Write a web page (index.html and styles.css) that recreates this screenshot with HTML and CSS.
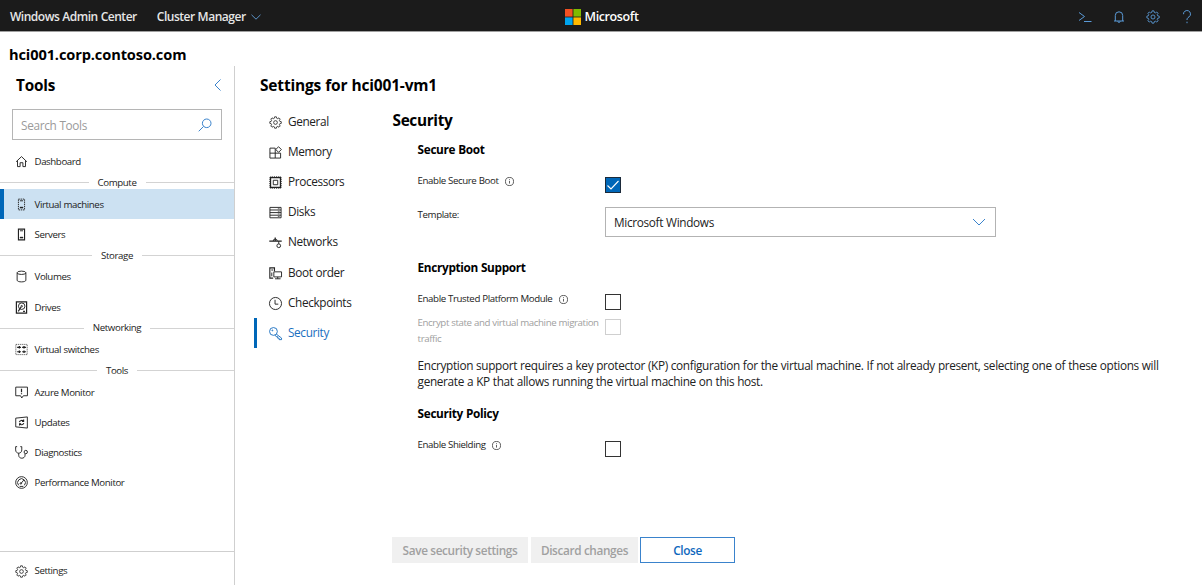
FILE: index.html
```html
<!DOCTYPE html>
<html lang="en">
<head>
<meta charset="utf-8">
<title>Windows Admin Center</title>
<link rel="stylesheet" href="styles.css">
</head>
<body>
<svg class="defs" width="0" height="0">
  <symbol id="gear" viewBox="0 0 16 16"><path d="M6.900 1h2.200l.4 1.800 1.200.5 1.600-1 1.500 1.500-1 1.600.5 1.200 1.800.4v2.100l-1.800.4-.5 1.200 1 1.600-1.500 1.500-1.600-1-1.200.5L9.100 15H6.900l-.4-1.700-1.200-.5-1.600 1-1.500-1.500 1-1.600-.5-1.200L1 9.100V7l1.700-.4.5-1.200-1-1.600 1.500-1.500 1.600 1 1.200-.5z"/><circle cx="8" cy="8" r="2.300"/></symbol>
  <symbol id="info" viewBox="0 0 10 10"><circle cx="5" cy="5" r="4.500"/><path d="M5 4.300v3M5 2.500v.9"/></symbol>
  <symbol id="chevron" viewBox="0 0 14 8"><path d="M1 1l6 6 6-6"/></symbol>
</svg>
<header class="topbar">
  <div class="topbar-left">
    <span>Windows Admin Center</span>
    <span class="solution">Cluster Manager</span>
    <svg class="icon top-chevron" viewBox="0 0 10 6"><path d="M.5 .8L5 5.200 9.500 .8"/></svg>
  </div>
  <div class="brand">
    <svg class="brand-logo" viewBox="0 0 16 16"><path fill="#f25022" d="M0 0h7.600v7.600H0z"/><path fill="#7fba00" d="M8.400 0H16v7.600H8.400z"/><path fill="#00a4ef" d="M0 8.400h7.600V16H0z"/><path fill="#ffb900" d="M8.400 8.400H16V16H8.400z"/></svg>
    <span>Microsoft</span>
  </div>
  <div class="topbar-actions">
    <svg class="icon" viewBox="0 0 14 14"><path d="M1 2.500l5.500 4L1 10.500M6 11.500h7.500"/></svg>
    <svg class="icon" viewBox="0 0 14 14"><path d="M2 11h10M3.300 11V5.500a3.700 3.700 0 0 1 7.400 0V11M5.800 11.300c0 1.500 2.400 1.500 2.400 0"/></svg>
    <svg class="icon"><use href="#gear"/></svg>
    <svg class="icon" viewBox="0 0 14 14"><path d="M3.500 4.200a3.500 3.500 0 1 1 5.500 2.700C7.500 7.900 7 8.300 7 10M7 11.700v1.500"/></svg>
  </div>
</header>
<h1 class="host">hci001.corp.contoso.com</h1>
<div class="shell">
  <aside class="sidebar">
    <div class="sidebar-head">
      <h2>Tools</h2>
      <svg class="icon collapse" viewBox="0 0 7 12"><path d="M6.500 .5L1 6l5.500 5.500"/></svg>
    </div>
    <div class="search">
      <span>Search Tools</span>
      <svg class="icon" viewBox="0 0 14 14"><circle cx="8.700" cy="5.300" r="4.300"/><path d="M5.600 8.400L.7 13.300"/></svg>
    </div>
    <nav class="tools">
      <a class="tool"><svg class="icon" viewBox="0 0 14 14"><path d="M1.200 7.300L7 1.700l5.800 5.600M2.700 6.200v6.300h2.800V8.300h3v4.200h2.800V6.200"/></svg>Dashboard</a>
      <div class="group">Compute</div>
      <a class="tool selected"><svg class="icon" viewBox="0 0 14 14"><path stroke-dasharray="1.500 .8" d="M3.700 1.200h6.600v11.600H3.700z"/><path stroke-width="1.600" d="M5.200 10.300h3.600"/><path d="M5.300 3h3.400"/></svg>Virtual machines</a>
      <a class="tool"><svg class="icon" viewBox="0 0 14 14"><path stroke-width="1.200" d="M3.700 1.200h6.600v11.600H3.700z"/><path stroke-width="1.600" d="M5.200 10.300h3.600"/><path d="M5.300 3h3.400"/></svg>Servers</a>
      <div class="group">Storage</div>
      <a class="tool"><svg class="icon" viewBox="0 0 14 14"><ellipse cx="7" cy="3" rx="4.700" ry="1.800"/><path d="M2.300 3v8c0 2.400 9.400 2.400 9.400 0V3"/></svg>Volumes</a>
      <a class="tool"><svg class="icon" viewBox="0 0 14 14"><path stroke-width="1.300" d="M1.500 .9h11v12.200h-11z"/><circle cx="7.200" cy="5.600" r="3.500"/><circle cx="7.200" cy="5.600" r=".8"/><path stroke-width="1.300" d="M6.500 6.500l-3 4.700M8.700 11.200h2"/></svg>Drives</a>
      <div class="group">Networking</div>
      <a class="tool"><svg class="icon" viewBox="0 0 14 14"><path stroke-width=".8" stroke-dasharray="1.200 .9" d="M.9 1.500h12.200v11H.9z"/><path stroke-width="1.300" d="M2.300 4.600h4.100M7.700 4.600h4.100M2.300 9.400h4.100M7.700 9.400h4.100"/><path stroke-width="1.400" d="M4.700 3.200v2.800M9.700 3.200v2.800M4.700 8v2.800M9.700 8v2.800"/></svg>Virtual switches</a>
      <div class="group">Tools</div>
      <a class="tool"><svg class="icon" viewBox="0 0 14 14"><path d="M.8 1.200h12.600v9.300H9L7.300 12.900 6 10.500H.8z"/><path stroke-width="1.300" d="M7 3v3.700M7 7.700V9"/></svg>Azure Monitor</a>
      <a class="tool"><svg class="icon" viewBox="0 0 14 14"><path d="M.8 2.300l12.500-1.300v12L.8 11.700z"/><path stroke-width="1.200" d="M4.700 6.600c.5-2 3.200-2.600 4.500-.9M9.300 3.900v2H7.500M9.500 7.600c-.6 2-3.200 2.400-4.500.8M4.900 10.200V8.300h1.700"/></svg>Updates</a>
      <a class="tool"><svg class="icon" viewBox="0 0 14 14"><path d="M2.300 .7H.7v3.500c0 4.700 6.600 4.700 6.600 0V.7H5.700M4 7.700v2.300c0 4.200 6.800 4.200 6.800 0V8.300"/><circle cx="11.600" cy="6.500" r="1.800"/></svg>Diagnostics</a>
      <a class="tool"><svg class="icon" viewBox="0 0 14 14"><circle cx="7" cy="7" r="6.300"/><path d="M3.900 10a4.200 4.200 0 1 1 6.200 0M6.500 8l3-3.700M5 11.200h4"/><circle cx="6.300" cy="8" r=".8"/></svg>Performance Monitor</a>
    </nav>
    <div class="sidebar-foot"><a class="tool"><svg class="icon"><use href="#gear"/></svg>Settings</a></div>
  </aside>
  <main class="main">
    <h2 class="page-title">Settings for hci001-vm1</h2>
    <div class="panes">
      <nav class="settings-nav">
        <a class="setting"><svg class="icon"><use href="#gear"/></svg>General</a>
        <a class="setting"><svg class="icon" viewBox="0 0 14 14"><path d="M1 2.300h5.700V13H1zM1 7.700h11.500V13H6.700M10.300 .8l3 3-3 3-3-3z"/></svg>Memory</a>
        <a class="setting"><svg class="icon" viewBox="0 0 14 14"><path stroke-width="1.300" d="M1.700 1.700h10.600v10.600H1.700z"/><path d="M4.600 4.600h4.800v4.800H4.600z"/><path stroke-width=".9" stroke-dasharray="1 1" d="M1.500 .7h11M1.500 13.300h11M.7 1.500v11M13.300 1.500v11"/></svg>Processors</a>
        <a class="setting"><svg class="icon" viewBox="0 0 14 14"><path d="M1 1.500h12v11.200H1zM1 4.300h12M1 7.100h12M1 9.900h12"/><path stroke-width=".7" d="M9.500 2.900h2M9.500 5.700h2M9.500 8.500h2M9.500 11.300h2"/></svg>Disks</a>
        <a class="setting"><svg class="icon" viewBox="0 0 14 14"><path stroke-width="1.300" d="M.3 5.500h13.400M6.700 1.500v4"/><path d="M4.500 5.500a2.200 2.200 0 0 1 4.400 0M10.500 5.500v3"/><circle cx="10.500" cy="10.500" r="2"/></svg>Networks</a>
        <a class="setting"><svg class="icon" viewBox="0 0 14 14"><path stroke-width="1.200" d="M4.500 12H.9V1h5v3.500M2.500 3.300h2"/><path d="M5.200 5.200h8.300v5.500H5.200zM9.400 10.700v2M6.500 12.700h6M3 6v4"/></svg>Boot order</a>
        <a class="setting"><svg class="icon" viewBox="0 0 14 14"><circle cx="7" cy="7" r="6.500"/><path d="M6.500 3v4.700H10"/></svg>Checkpoints</a>
        <a class="setting current"><svg class="icon" viewBox="0 0 14 14"><circle cx="4.800" cy="4.800" r="4.200"/><path d="M8 7.700l5.500 4.200v1.700h-2.600v-1.600H9.300v-1.600H7.700L6.500 8.700"/><circle cx="3.600" cy="3.700" r=".5"/></svg>Security</a>
      </nav>
      <section class="content">
        <h2>Security</h2>
        <div class="form">
          <h3>Secure Boot</h3>
          <div class="field boot">
            <label>Enable Secure Boot <svg class="icon info"><use href="#info"/></svg></label>
            <span class="box checked"><svg viewBox="0 0 14 14"><path d="M1.500 7.500l3.500 3.500 7.500-8"/></svg></span>
          </div>
          <div class="field">
            <label>Template:</label>
            <div class="select"><span>Microsoft Windows</span><svg class="icon"><use href="#chevron"/></svg></div>
          </div>
          <h3 class="encryption-title">Encryption Support</h3>
          <div class="field tpm">
            <label>Enable Trusted Platform Module <svg class="icon info"><use href="#info"/></svg></label>
            <span class="box"></span>
          </div>
          <div class="field traffic">
            <label>Encrypt state and virtual machine migration<br>traffic</label>
            <span class="box"></span>
          </div>
          <p>Encryption support requires a key protector (KP) configuration for the virtual machine. If not already present, selecting one of these options will<br>generate a KP that allows running the virtual machine on this host.</p>
          <h3>Security Policy</h3>
          <div class="field shielding">
            <label>Enable Shielding <svg class="icon info"><use href="#info"/></svg></label>
            <span class="box"></span>
          </div>
        </div>
        <div class="buttons">
          <button class="save" disabled>Save security settings</button>
          <button class="discard" disabled>Discard changes</button>
          <button class="close">Close</button>
        </div>
      </section>
    </div>
  </main>
</div>
</body>
</html>
```
FILE: styles.css
```css
* { box-sizing: border-box; }
body {
  margin: 0;
  height: 585px;
  overflow: hidden;
  background: #fff;
  color: #222;
  font: 11.8px/16px "Open Sans", "Noto Sans", sans-serif;
  letter-spacing: -0.33px;
  word-spacing: 0.3px;
}
h1, h2, h3, p { margin: 0; }
.defs { display: block; }
.icon {
  width: 14px;
  height: 14px;
  flex: none;
  fill: none;
  stroke: currentColor;
  stroke-width: 1;
  overflow: visible;
}

/* Top bar */
.topbar {
  display: grid;
  grid-template-columns: 1fr auto 1fr;
  align-items: center;
  height: 32px;
  padding: 2px 8px 0 10px;
  background: #1b1b1b;
  border-bottom: 1px solid #a0a0a0;
  color: #e6e6e6;
  font-weight: 600;
  font-size: 12px;
  letter-spacing: -0.48px;
}
.topbar-left { display: flex; align-items: center; }
.solution { margin-left: 20px; }
.top-chevron { width: 10px; height: 6px; margin-left: 5px; color: #5b93c8; }
.brand { display: flex; align-items: center; gap: 4px; margin-right: 1px; color: #fff; font-size: 12.5px; letter-spacing: -0.38px; }
.brand-logo { width: 16px; height: 16px; }
.topbar-actions { display: flex; justify-content: flex-end; gap: 20px; color: #5b9bd8; }

.host {
  height: 34px;
  padding: 12px 0 0 9px;
  color: #000;
  font-size: 14.6px;
  line-height: 20px;
  letter-spacing: -0.12px;
}
.shell { display: flex; height: 519px; }

/* Sidebar */
.sidebar {
  display: flex;
  flex-direction: column;
  width: 235px;
  border-right: 1px solid #cfcfcf;
}
.sidebar-head {
  display: flex;
  justify-content: space-between;
  height: 43px;
  padding: 9px 13px 0 16px;
}
.sidebar-head h2 { color: #000; font-size: 15.3px; line-height: 20px; letter-spacing: -0.2px; }
.collapse { width: 7px; height: 12px; margin-top: 4px; color: #3a83cc; }
.search {
  display: flex;
  align-items: center;
  justify-content: space-between;
  height: 31px;
  margin: 0 12px;
  padding: 0 9px 0 8px;
  border: 1px solid #b5b5b5;
  color: #9a9a9a;
}
.search .icon { color: #3a83cc; }
.tools { margin-top: 6.600px; }
.tool {
  display: flex;
  align-items: center;
  gap: 6.500px;
  height: 30.150px;
  padding: 1px 0 0 15px;
  font-size: 9.7px;
  letter-spacing: -0.4px;
  word-spacing: 0.2px;
}
.tool .icon { width: 13px; height: 13px; margin-top: -1px; }
.selected {
  padding-left: 11px;
  border-left: 4px solid #0067b8;
  background: #cce1f2;
}
.group {
  display: flex;
  align-items: center;
  gap: 9px;
  height: 12.400px;
  font-size: 9.7px;
  line-height: 12px;
  letter-spacing: -0.38px;
}
.group::before, .group::after { content: ""; flex: 1; height: 1px; background: #d3d3d3; }
.sidebar-foot { height: 34px; margin-top: auto; padding-top: 4px; border-top: 1px solid #cfcfcf; }
.sidebar-foot .tool { padding-top: 0; }
.sidebar-foot .icon { margin-top: 0; }

/* Main pane */
.main { flex: 1; padding-left: 19px; }
.page-title {
  height: 41px;
  padding: 9px 0 0 6px;
  color: #000;
  font-size: 15.5px;
  line-height: 20px;
  letter-spacing: -0.18px;
}
.panes { display: flex; }
.settings-nav { width: 138px; }
.setting {
  display: flex;
  align-items: center;
  gap: 6px;
  height: 30.100px;
  padding: 0 0 2px 15px;
  letter-spacing: -0.37px;
}
.setting .icon { width: 13px; height: 13px; margin-top: 3px; }
.current { padding-left: 12px; border-left: 3px solid #0067b8; color: #1a6fc0; }

.content { flex: 1; padding-top: 3px; }
.content h2 { padding: 1px 0 0 .5px; color: #000; font-size: 15.4px; line-height: 20px; letter-spacing: -0.35px; }
.form { padding: 10px 0 0 25.600px; }
.form h3 { margin-bottom: 16px; color: #000; font-size: 11.8px; line-height: 16px; letter-spacing: -0.34px; }
.form .encryption-title { margin-top: 22px; }
.field { display: grid; grid-template-columns: 187.400px 391px; align-items: start; }
.field label { font-size: 9.7px; letter-spacing: -0.4px; word-spacing: 0.2px; white-space: nowrap; }
.info { width: 9px; height: 9px; margin-left: 4px; vertical-align: -1.500px; stroke-width: .8; }
.box { width: 16px; height: 16px; border: 1px solid #333; background: #fff; }
.box.checked { background: #0067b8; border-color: #1b2a3a; }
.box svg { display: block; width: 14px; height: 14px; fill: none; stroke: #fff; stroke-width: 1.100; }
.boot { height: 34px; }
.boot .box, .shielding .box { margin-top: 4px; }
.tpm { height: 24px; }
.tpm .box { margin-top: 3px; }
.traffic { height: 31px; color: #a0a0a0; }
.traffic label { line-height: 15.500px; }
.traffic .box { margin-top: 4px; border-color: #cfcfcf; }
.select {
  display: flex;
  align-items: center;
  justify-content: space-between;
  height: 30px;
  padding: 0 9px 0 8px;
  border: 1px solid #b3b3b3;
}
.select .icon { width: 14px; height: 8px; margin-top: -1px; color: #3a83cc; }
.form p { margin: 12px 0 16px; line-height: 15.500px; white-space: nowrap; letter-spacing: -0.345px; }
.buttons { display: flex; margin-top: 80px; }
.buttons button {
  height: 26px;
  padding: 1px 0 0;
  border: 0;
  background: #f0f0f0;
  color: #a0a0a0;
  font: 600 11.8px/25px "Open Sans", "Noto Sans", sans-serif;
  letter-spacing: -0.36px;
}
.buttons .save { width: 136px; margin-right: 3px; }
.buttons .discard { width: 107px; margin-right: 2px; }
.buttons .close { width: 95px; border: 1px solid #3a83cc; background: #fff; color: #0f68bd; line-height: 23px; }
```
